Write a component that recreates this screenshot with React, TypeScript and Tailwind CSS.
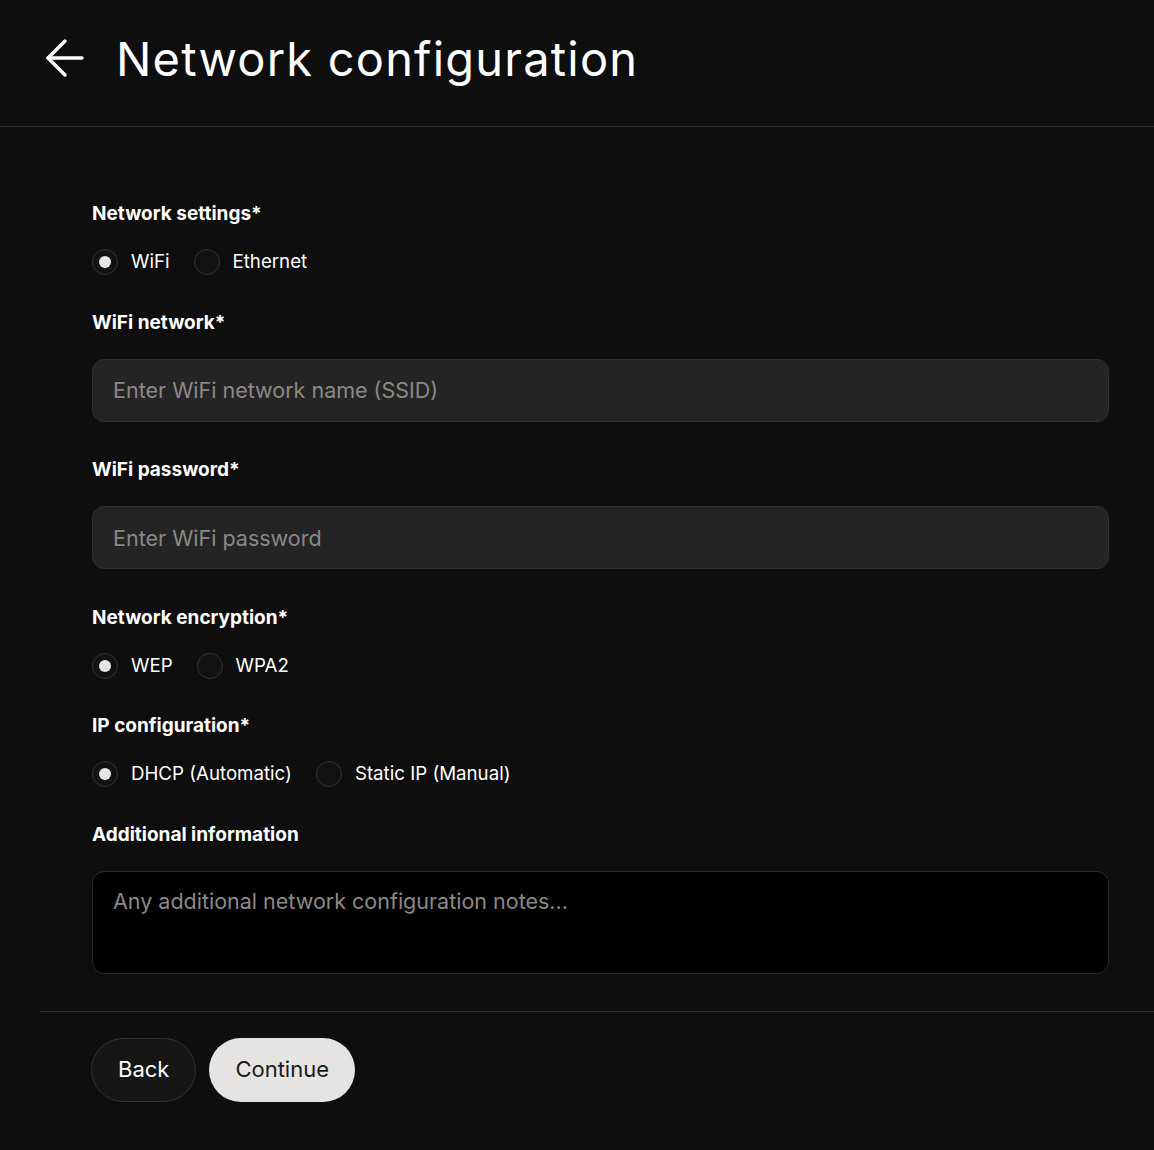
import { ArrowLeft } from "lucide-react";

type Option = { label: string; checked?: boolean };

function Radio({ label, checked }: Option) {
  return (
    <label className="flex items-center gap-[13px] cursor-pointer">
      <span className="w-[26px] h-[26px] rounded-full border border-[#343434] bg-[#121212] flex items-center justify-center">
        {checked && <span className="w-[12px] h-[12px] rounded-full bg-[#e6e6e6]" />}
      </span>
      <span className="text-[18.7px] leading-[24px] text-white">{label}</span>
    </label>
  );
}

function RadioGroup({ options }: { options: Option[] }) {
  return (
    <div className="flex items-center gap-[24px] h-[24px]">
      {options.map((o) => (
        <Radio key={o.label} {...o} />
      ))}
    </div>
  );
}

function Label({ children }: { children: React.ReactNode }) {
  return <div className="text-[19px] leading-[28px] font-bold text-white">{children}</div>;
}

function Field({ label, children }: { label: string; children: React.ReactNode }) {
  return (
    <div className="flex flex-col gap-[22px]">
      <Label>{label}</Label>
      {children}
    </div>
  );
}

function TextInput({ placeholder }: { placeholder: string }) {
  return (
    <input
      placeholder={placeholder}
      className="h-[63px] w-full rounded-[12px] border border-[#2f2f2f] bg-[#242424] px-[20px] text-[21.5px] text-white placeholder:text-[#8c8884] outline-none"
    />
  );
}

export default function App() {
  return (
    <div
      className="min-h-[1150px] bg-[#0e0e0e] text-white"
      style={{ fontFamily: "Inter, 'Noto Sans', sans-serif" }}
    >
      <header className="h-[127px] border-b border-[#2a2a2a] flex items-center gap-[22px] pl-[36px] pb-[10px]">
        <ArrowLeft className="w-[58px] h-[58px] text-white" strokeWidth={1.45} />
        <h1 className="text-[47px] leading-none font-normal tracking-[1.2px]">Network configuration</h1>
      </header>

      <main className="pl-[92px] pr-[45px] pt-[73px] flex flex-col gap-[34.5px]">
        <Field label="Network settings*">
          <RadioGroup options={[{ label: "WiFi", checked: true }, { label: "Ethernet" }]} />
        </Field>
        <Field label="WiFi network*">
          <TextInput placeholder="Enter WiFi network name (SSID)" />
        </Field>
        <Field label="WiFi password*">
          <TextInput placeholder="Enter WiFi password" />
        </Field>
        <Field label="Network encryption*">
          <RadioGroup options={[{ label: "WEP", checked: true }, { label: "WPA2" }]} />
        </Field>
        <Field label="IP configuration*">
          <RadioGroup
            options={[{ label: "DHCP (Automatic)", checked: true }, { label: "Static IP (Manual)" }]}
          />
        </Field>
        <Field label="Additional information">
          <textarea
            placeholder="Any additional network configuration notes..."
            className="h-[103px] w-full resize-none rounded-[12px] border border-[#2a2a2a] bg-black px-[20px] py-[14px] text-[21.5px] leading-[30px] text-white placeholder:text-[#8c8884] outline-none"
          />
        </Field>
      </main>

      <footer className="ml-[40px] mt-[37px] border-t border-[#2a2a2a] pt-[26px] pb-[48px] pl-[51px] flex gap-[13px]">
        <button className="h-[64px] px-[26px] rounded-full border border-[#333] bg-[#161616] text-[22px] text-white">
          Back
        </button>
        <button className="h-[64px] px-[26px] rounded-full bg-[#e5e4e2] text-[22px] text-[#1a1a1a]">
          Continue
        </button>
      </footer>
    </div>
  );
}
